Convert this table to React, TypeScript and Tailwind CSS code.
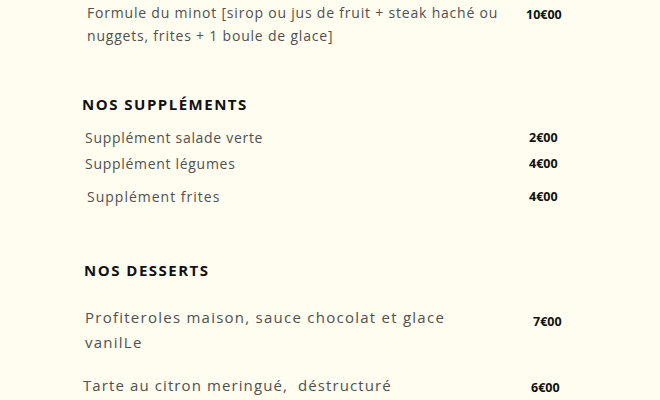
const body = "font-['Open_Sans',sans-serif] text-[#505050]";
const price = "font-['Open_Sans',sans-serif] font-bold text-[12.5px] text-[#111]";
const heading =
  "font-['Open_Sans',sans-serif] font-bold text-[15px] tracking-[1.5px] text-[#111]";

function Row({
  text,
  amount,
  textPad = "pl-[85px]",
  pricePad = "pl-[529px]",
  size = "text-[14px] tracking-[0.6px] leading-[23px]",
  priceTop = "top-[3px]",
  className = "",
}: {
  text: React.ReactNode;
  amount: string;
  textPad?: string;
  pricePad?: string;
  size?: string;
  priceTop?: string;
  className?: string;
}) {
  return (
    <div className={`relative flex ${className}`}>
      <div className={`${textPad} w-[560px] ${body} ${size}`}>{text}</div>
      <div className={`absolute ${priceTop} left-0 ${pricePad} ${price}`}>{amount}</div>
    </div>
  );
}

export default function App() {
  return (
    <div className="w-[660px] h-[400px] overflow-hidden bg-[#fffdf0]">
      <div className="pt-[1px]">
        <Row
          textPad="pl-[87px]"
          pricePad="pl-[526px]"
          size="text-[14px] tracking-[0.8px] leading-[23px]"
          priceTop="top-[5px]"
          text={
            <>
              Formule du minot [sirop ou jus de fruit + steak haché ou
              <br />
              nuggets, frites + 1 boule de glace]
            </>
          }
          amount="10€00"
        />
      </div>

      <h2 className={`${heading} pl-[82px] mt-[46px]`}>NOS SUPPLÉMENTS</h2>

      <div className="mt-[10px] flex flex-col">
        <Row
          text="Supplément salade verte"
          amount="2€00"
          className="h-[26px]"
          size="text-[14px] tracking-[0.7px] leading-[23px]"
        />
        <Row
          text="Supplément légumes"
          amount="4€00"
          className="h-[33px]"
          size="text-[14px] tracking-[0.7px] leading-[23px]"
        />
        <Row
          textPad="pl-[87px]"
          text="Supplément frites"
          amount="4€00"
          size="text-[14px] tracking-[1px] leading-[23px]"
        />
      </div>

      <h2 className={`${heading} pl-[84px] mt-[51px]`}>NOS DESSERTS</h2>

      <div className="mt-[24px] flex flex-col">
        <Row
          pricePad="pl-[533px]"
          size="text-[15px] tracking-[1.25px] leading-[25px]"
          priceTop="top-[8px]"
          text={
            <>
              Profiteroles maison, sauce chocolat et glace
              <br />
              vanilLe
            </>
          }
          amount="7€00"
        />
        <Row
          className="mt-[18px]"
          textPad="pl-[83px]"
          pricePad="pl-[531px]"
          size="text-[15px] tracking-[1.1px] leading-[25px]"
          priceTop="top-[6px]"
          text={<>Tarte au citron meringué,&nbsp; déstructuré</>}
          amount="6€00"
        />
      </div>
    </div>
  );
}
